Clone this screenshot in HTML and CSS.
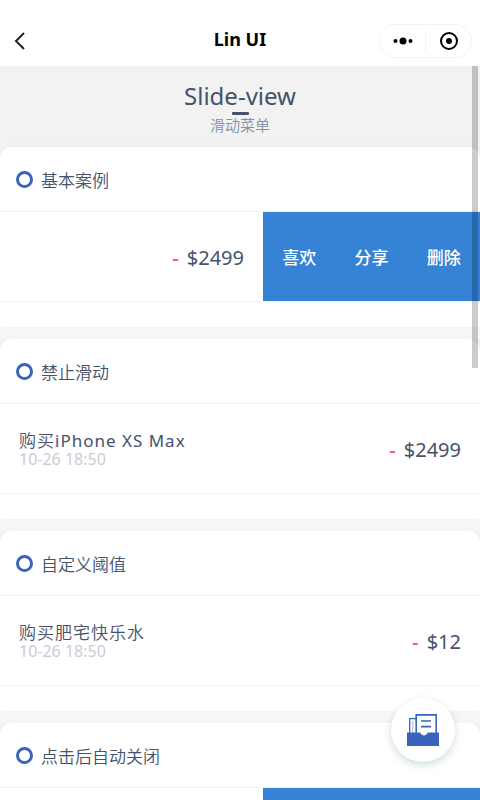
FILE: index.html
```html
<!DOCTYPE html>
<html lang="zh-CN">
<head>
<meta charset="utf-8">
<meta name="viewport" content="width=device-width, initial-scale=1">
<title>Lin UI</title>
<link rel="stylesheet" href="styles.css">
</head>
<body>
<div class="app">
  <header class="navbar">
    <button class="back" aria-label="返回">
      <svg width="12" height="18" viewBox="0 0 12 18" fill="none" stroke="#222" stroke-width="2"><path d="M10 1 2 9l8 8"/></svg>
    </button>
    <h1 class="navbar-title">Lin UI</h1>
    <div class="capsule">
      <button class="capsule-btn" aria-label="更多">
        <svg width="20" height="8" viewBox="0 0 20 8"><circle cx="2.5" cy="4" r="2"/><circle cx="10" cy="4" r="3.5"/><circle cx="17.5" cy="4" r="2"/></svg>
      </button>
      <button class="capsule-btn" aria-label="关闭">
        <svg width="18" height="18" viewBox="0 0 18 18"><circle cx="9" cy="9" r="8" fill="none" stroke="#000" stroke-width="2"/><circle cx="9" cy="9" r="3"/></svg>
      </button>
    </div>
  </header>

  <main class="page">
    <div class="intro">
      <h2 class="intro-title">Slide-view</h2>
      <p class="intro-sub">滑动菜单</p>
    </div>

    <section class="block">
      <div class="card">
        <h3 class="card-title">基本案例</h3>
        <div class="slide">
          <div class="item"><p class="price"><span class="minus">-</span> $2499</p></div>
          <div class="actions"><button>喜欢</button><button>分享</button><button>删除</button></div>
        </div>
      </div>
    </section>

    <section class="block">
      <div class="card">
        <h3 class="card-title">禁止滑动</h3>
        <div class="slide">
          <div class="item">
            <div class="info"><p class="name">购买<span class="latin">iPhone XS Max</span></p><p class="date">10-26 18:50</p></div>
            <p class="price"><span class="minus">-</span> $2499</p>
          </div>
        </div>
      </div>
    </section>

    <section class="block">
      <div class="card">
        <h3 class="card-title">自定义阈值</h3>
        <div class="slide">
          <div class="item">
            <div class="info"><p class="name">购买肥宅快乐水</p><p class="date">10-26 18:50</p></div>
            <p class="price"><span class="minus">-</span> $12</p>
          </div>
        </div>
      </div>
    </section>

    <section class="block">
      <div class="card">
        <h3 class="card-title">点击后自动关闭</h3>
        <div class="slide">
          <div class="item"></div>
          <div class="actions"></div>
        </div>
      </div>
    </section>

    <div class="scroll-thumb"></div>
  </main>

  <button class="fab" aria-label="文档">
    <svg width="32" height="32" viewBox="0 0 32 32">
      <g fill="none" stroke="#3963bc">
        <path stroke-width="1.3" d="M9 4.700H2.700V19"/>
        <path stroke-width="1.3" d="M5.700 7v12" stroke="#b9c9e8"/>
        <path stroke-width="1.6" d="M9.200 19V.9h20V19"/>
        <path stroke-width="1.7" d="M14 7h10M14 12.700h10"/>
      </g>
      <path fill="#3963bc" d="M0 18.500h13.500c0 1.800 1 2 2 2.300l1.500 1 1.500-1c1-.3 2-.5 2-2.300H32V32H0z"/>
    </svg>
  </button>
</div>
</body>
</html>
```
FILE: styles.css
```css
*,
*::before,
*::after {
  box-sizing: border-box;
}

body,
h1,
h2,
h3,
p {
  margin: 0;
  font-weight: 400;
}

body {
  font-family: "Noto Sans", "Noto Sans CJK SC", sans-serif;
  color: #45526b;
}

button {
  display: flex;
  align-items: center;
  justify-content: center;
  padding: 0;
  border: 0;
  background: none;
  font: inherit;
  color: inherit;
}

.app {
  display: flex;
  flex-direction: column;
  height: 100vh;
  overflow: hidden;
  background: #f2f2f2;
}

.navbar {
  display: grid;
  grid-template-columns: 1fr auto 1fr;
  align-items: center;
  flex: none;
  padding: 24px 8px 8px;
  background: #fff;
}

.back {
  justify-self: start;
  margin-left: 6px;
}

.navbar-title {
  padding-bottom: 4px;
  font-size: 18px;
  line-height: 30px;
  font-weight: 700;
  color: #000;
}

.capsule {
  display: flex;
  justify-self: end;
  align-items: center;
  height: 34px;
  border: 1px solid #f2f2f2;
  border-radius: 17px;
}

.capsule-btn {
  width: 45px;
  height: 20px;
}

.capsule-btn + .capsule-btn {
  width: 46px;
  border-left: 1px solid #f2f2f2;
}

.page {
  position: relative;
  flex: 1;
  min-height: 0;
  overflow: hidden;
}

.intro {
  padding: 14px 0 11px;
  text-align: center;
}

.intro-title {
  font-size: 24px;
  line-height: 32px;
}

.intro-title::after {
  content: "";
  display: block;
  width: 17px;
  height: 3px;
  margin: 0 auto;
  border-radius: 1px;
  background: #45526b;
}

.intro-sub {
  font-size: 15px;
  line-height: 21px;
  font-weight: 350;
  color: #8290aa;
}

.block {
  border-bottom: 12px solid #f8f8f8;
}

.card {
  padding-bottom: 25px;
  border-radius: 12px 12px 0 0;
  background: #fff;
  box-shadow: 0 0 12px rgba(0, 0, 0, 0.03);
}

.card-title {
  display: flex;
  align-items: center;
  gap: 8px;
  height: 65px;
  padding: 0 16px;
  border-bottom: 1px solid #f2f2f2;
  font-size: 17px;
  font-weight: 350;
}

.card-title::before {
  content: "";
  width: 17px;
  height: 17px;
  border: 3px solid #3963bc;
  border-radius: 50%;
}

.slide {
  display: flex;
  height: 90px;
  border-bottom: 1px solid #f2f2f2;
}

.item {
  display: flex;
  flex: 1;
  align-items: center;
  padding: 0 19px;
}

.name {
  font-size: 17px;
  line-height: 20px;
  font-weight: 350;
  letter-spacing: 1px;
}

.latin {
  font-weight: 400;
}

.date {
  font-size: 16px;
  line-height: 16px;
  color: #c8ccd5;
}

.price {
  margin-left: auto;
  padding-top: 2px;
  font-size: 20px;
}

.minus {
  margin-right: 3px;
  font-weight: 600;
  color: #f4627d;
}

.actions {
  display: flex;
  width: 217px;
  background: #3683d6;
  font-size: 17px;
  font-weight: 500;
  color: #fff;
}

.actions button {
  flex: 1;
}

.scroll-thumb {
  position: absolute;
  top: 0;
  right: 2px;
  width: 6px;
  height: 302px;
  background: rgba(0, 0, 0, 0.2);
}

.fab {
  position: fixed;
  right: 25px;
  bottom: 38px;
  width: 64px;
  height: 64px;
  border-radius: 50%;
  background: #fff;
  box-shadow: 0 3px 8px rgba(0, 90, 70, 0.2);
}
```
